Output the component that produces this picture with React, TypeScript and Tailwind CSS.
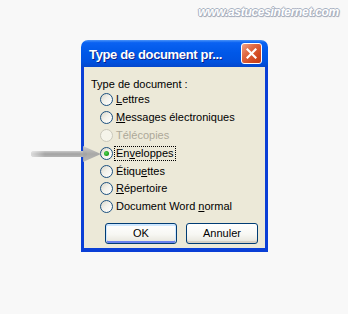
import React from "react";

type Option = {
  label: React.ReactNode;
  checked?: boolean;
  disabled?: boolean;
  focused?: boolean;
};

const u = (s: string) => <span className="underline underline-offset-[1px]">{s}</span>;

const options: Option[] = [
  { label: <>{u("L")}ettres</> },
  { label: <>{u("M")}essages électroniques</> },
  { label: <>Télécopies</>, disabled: true },
  { label: <>En{u("v")}eloppes</>, checked: true, focused: true },
  { label: <>Étiqu{u("e")}ttes</> },
  { label: <>{u("R")}épertoire</> },
  { label: <>Document Word {u("n")}ormal</> },
];

function Radio({ checked, disabled }: { checked?: boolean; disabled?: boolean }) {
  return (
    <div
      className={
        disabled
          ? "w-[13px] h-[13px] rounded-full border border-[#cac8bb] bg-[#f5f4ea] flex items-center justify-center"
          : "w-[13px] h-[13px] rounded-full border border-[#1c5180] bg-[linear-gradient(135deg,#d8d5c8_0%,#f2f1ea_45%,#ffffff_100%)] flex items-center justify-center"
      }
    >
      {checked && (
        <div className="w-[5px] h-[5px] rounded-full bg-[radial-gradient(circle_at_40%_40%,#55d655_0%,#21a121_60%,#1a8a1a_100%)]" />
      )}
    </div>
  );
}

function XpButton({ children, isDefault }: { children: React.ReactNode; isDefault?: boolean }) {
  return (
    <div
      className={
        "w-[72px] h-[21px] rounded-[3px] border border-[#003c74] flex items-center justify-center text-[11px] text-black bg-[linear-gradient(180deg,#ffffff_0%,#f7f7f3_55%,#e6e4da_100%)] " +
        (isDefault
          ? "shadow-[inset_0_1px_0_1px_#cee7ff,inset_0_-1px_0_1px_#6982ee]"
          : "shadow-[inset_0_-2px_0_0_#d6d0c5]")
      }
    >
      {children}
    </div>
  );
}

function Arrow() {
  return (
    <svg
      className="absolute left-[28px] top-[143px]"
      width="76"
      height="24"
      viewBox="0 0 76 24"
    >
      <defs>
        <linearGradient id="shaft" x1="0" y1="0" x2="0" y2="1">
          <stop offset="0" stopColor="#c9c9c9" />
          <stop offset="0.5" stopColor="#a3a3a3" />
          <stop offset="1" stopColor="#b5b5b5" />
        </linearGradient>
        <linearGradient id="fade" x1="0" y1="0" x2="1" y2="0">
          <stop offset="0" stopColor="#ffffff" stopOpacity="0.6" />
          <stop offset="0.25" stopColor="#ffffff" stopOpacity="0" />
        </linearGradient>
      </defs>
      <rect x="3" y="8" width="56" height="6" rx="3" fill="url(#shaft)" />
      <rect x="3" y="8" width="56" height="6" rx="3" fill="url(#fade)" />
      <path d="M55 3 L73 11 L55 19 Z" fill="url(#shaft)" opacity="0.92" />
    </svg>
  );
}

export default function App() {
  return (
    <div className="relative w-[348px] h-[314px] bg-[#f8f8f8] overflow-hidden font-['Liberation_Sans',Arial,sans-serif]">
      <div className="absolute right-[9px] top-[3px] text-[12px] font-bold italic tracking-[-0.3px] text-white [text-shadow:1px_0_0_#a9b2c2,-1px_0_0_#a9b2c2,0_1px_0_#a9b2c2,0_-1px_0_#a9b2c2,1px_1px_1px_#9aa3b3]">
        www.astucesinternet.com
      </div>

      <div className="pt-[40px] pl-[81px]">
        <div className="w-[187px] rounded-t-[7px] overflow-hidden">
          <div className="h-[27px] flex items-center justify-between pl-[8px] pr-[6px] bg-[linear-gradient(180deg,#4a93f8_0%,#0a62f2_10%,#0058e8_45%,#0052e0_80%,#0447cc_100%)]">
            <span className="text-white text-[13px] font-bold tracking-[-0.35px] leading-none mt-[1px] [text-shadow:1px_1px_0_#0a1f8a]">
              Type de document pr...
            </span>
            <div className="w-[21px] h-[21px] rounded-[3px] border border-white flex items-center justify-center bg-[linear-gradient(135deg,#f0a48a_0%,#e06a45_35%,#d24a22_70%,#c23d18_100%)]">
              <svg width="11" height="11" viewBox="0 0 11 11">
                <path d="M1.5 1.5 L9.5 9.5 M9.5 1.5 L1.5 9.5" stroke="white" strokeWidth="2.2" strokeLinecap="square" />
              </svg>
            </div>
          </div>

          <div className="h-[185px] bg-[#ece9d8] border-x-[3px] border-b-[4px] border-[#0a3fd6] pl-[7px] pt-[11px] text-[11px] text-black">
            <div className="h-[13px] leading-[13px]">Type de document :</div>
            <div className="flex flex-col">
              {options.map((o, i) => (
                <div key={i} className="h-[17.8px] flex items-center pl-[9px]">
                  <Radio checked={o.checked} disabled={o.disabled} />
                  {o.focused ? (
                    <span className="ml-[1px] px-[1px] border border-dotted border-black leading-[13px]">
                      {o.label}
                    </span>
                  ) : (
                    <span
                      className={
                        "ml-[3px] leading-[13px] " + (o.disabled ? "text-[#aca899]" : "")
                      }
                    >
                      {o.label}
                    </span>
                  )}
                </div>
              ))}
            </div>
            <div className="flex gap-[9px] pl-[14px] mt-[7px]">
              <XpButton isDefault>OK</XpButton>
              <XpButton>Annuler</XpButton>
            </div>
          </div>
        </div>
      </div>

      <Arrow />
    </div>
  );
}
